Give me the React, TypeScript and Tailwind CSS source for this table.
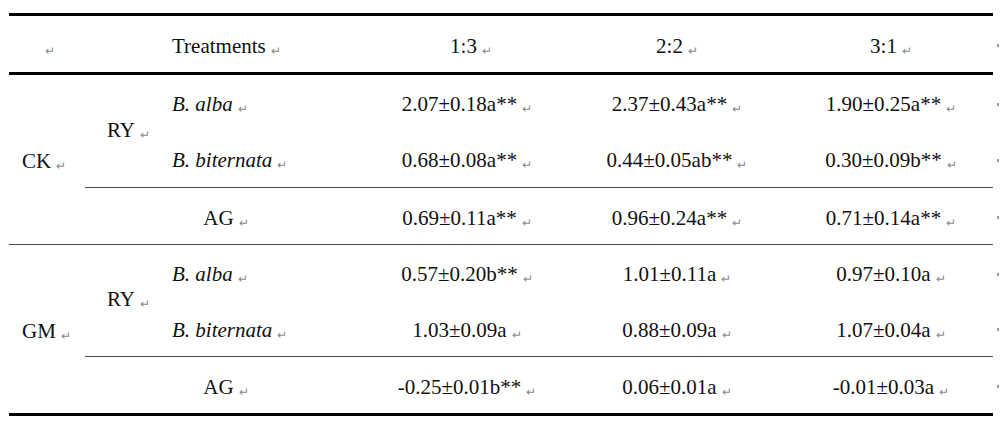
import React from "react";

const Mark: React.FC = () => (
  <span className="ml-[5px] text-[12px] text-[#8a8a8a] align-[-2px]">↵</span>
);

const EdgeMark: React.FC = () => (
  <span className="absolute right-[-6px] top-1/2 h-[3px] w-[2px] bg-[#9a9a9a]" />
);

type Row = {
  group?: string;
  sub?: string;
  name: string;
  italic: boolean;
  values: string[];
  line?: "part" | "full";
  h: string;
};

const rows: Row[] = [
  { group: "CK", sub: "RY", name: "B. alba", italic: true, values: ["2.07±0.18a**", "2.37±0.43a**", "1.90±0.25a**"], h: "h-[57px]" },
  { name: "B. biternata", italic: true, values: ["0.68±0.08a**", "0.44±0.05ab**", "0.30±0.09b**"], line: "part", h: "h-[57px]" },
  { name: "AG", italic: false, values: ["0.69±0.11a**", "0.96±0.24a**", "0.71±0.14a**"], line: "full", h: "h-[57px]" },
  { group: "GM", sub: "RY", name: "B. alba", italic: true, values: ["0.57±0.20b**", "1.01±0.11a", "0.97±0.10a"], h: "h-[56px]" },
  { name: "B. biternata", italic: true, values: ["1.03±0.09a", "0.88±0.09a", "1.07±0.04a"], line: "part", h: "h-[56px]" },
  { name: "AG", italic: false, values: ["-0.25±0.01b**", "0.06±0.01a", "-0.01±0.03a"], h: "h-[58px]" },
];

export default function App() {
  return (
    <div className="w-[1000px] h-[429px] bg-white pl-[9px] pt-[13px] text-[#111] font-['Liberation_Serif','Times_New_Roman',serif] text-[21px] leading-none">
      <table className="w-[984px] table-fixed border-collapse">
        <colgroup>
          <col className="w-[76px]" />
          <col className="w-[80px]" />
          <col className="w-[204px]" />
          <col className="w-[196px]" />
          <col className="w-[224px]" />
          <col className="w-[204px]" />
        </colgroup>
        <thead>
          <tr className="h-[59px] border-t-[3px] border-b-[3px] border-black">
            <td className="text-center pt-[4px]">
              <Mark />
            </td>
            <td />
            <td className="pl-[7px] pt-[4px]">
              Treatments
              <Mark />
            </td>
            <td className="text-center pt-[4px] pl-[8px]">
              1:3
              <Mark />
            </td>
            <td className="text-center pt-[4px]">
              2:2
              <Mark />
            </td>
            <td className="relative text-center pt-[4px]">
              3:1
              <Mark />
              <EdgeMark />
            </td>
          </tr>
        </thead>
        <tbody>
          {rows.map((r, i) => {
            const last = i === rows.length - 1;
            const partBorder = r.line === "part" ? "border-b border-[#4a4a4a]" : "";
            return (
              <tr
                key={`row-${i}`}
                className={`${r.h} ${r.line === "full" ? "border-b border-[#4a4a4a]" : ""} ${
                  last ? "border-b-[3px] border-black" : ""
                }`}
              >
                {r.group && (
                  <td rowSpan={3} className="pl-[13px] pt-[4px]">
                    {r.group}
                    <Mark />
                  </td>
                )}
                {r.sub && (
                  <td rowSpan={2} className="border-b border-[#4a4a4a] pl-[22px] pb-[2px]">
                    {r.sub}
                    <Mark />
                  </td>
                )}
                {r.italic ? (
                  <td className={`pl-[7px] pt-[4px] ${partBorder}`}>
                    <i>{r.name}</i>
                    <Mark />
                  </td>
                ) : (
                  <td colSpan={2} className="text-center pt-[4px] pr-[2px]">
                    {r.name}
                    <Mark />
                  </td>
                )}
                {r.values.map((v, j) => (
                  <td
                    key={`v-${i}-${j}`}
                    className={`text-center pt-[4px] ${partBorder} ${j === 2 ? "relative" : ""}`}
                  >
                    {v}
                    <Mark />
                    {j === 2 && <EdgeMark />}
                  </td>
                ))}
              </tr>
            );
          })}
        </tbody>
      </table>
    </div>
  );
}
